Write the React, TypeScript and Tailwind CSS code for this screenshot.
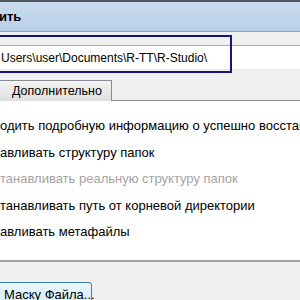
import React from 'react'

const options = [
  { text: 'одить подробную информацию о успешно восстановленных файлах', muted: false },
  { text: 'авливать структуру папок', muted: false },
  { text: 'танавливать реальную структуру папок', muted: true },
  { text: 'танавливать путь от корневой директории', muted: false },
  { text: 'авливать метафайлы', muted: false },
]

export default function App() {
  return (
    <div
      className="w-[300px] h-[300px] overflow-hidden bg-[#f0f0f0] text-[13px] text-black flex flex-col"
      style={{ fontFamily: '"Liberation Sans", Arial, sans-serif' }}
    >
      {/* title bar */}
      <div className="h-[32px] shrink-0 border-t-2 border-[#505860] border-b border-b-[#8ea4bd] bg-gradient-to-b from-[#cadcef] to-[#b8cfe8] flex items-center">
        <span className="ml-[-1px] text-[13px] font-semibold">ить</span>
      </div>

      {/* path field */}
      <div className="relative h-[44px] shrink-0 bg-[#f0f0f0] pt-[13px]">
        <div className="h-[25px] bg-white border-t border-t-[#abadb3] border-b border-b-[#e3e9ef] flex items-center pl-[1px] text-[12px]">
          <span className="whitespace-nowrap">Users\user\Documents\R-TT\R-Studio\</span>
        </div>
        <div className="absolute left-[-4px] top-[3px] w-[236px] h-[38px] border-2 border-[#16167a]" />
      </div>

      {/* tabs */}
      <div className="h-[25px] shrink-0 flex items-end">
        <div className="w-[112px] h-[21px] border border-b-0 border-l-0 border-[#898c95] bg-gradient-to-b from-[#f4f4f4] to-[#dedede] flex items-center pl-[12px] text-[12.5px]">
          Дополнительно
        </div>
        <div className="flex-1 border-b border-[#898c95]" />
      </div>

      {/* options */}
      <div className="h-[159px] shrink-0 bg-white flex flex-col pt-[17px] gap-[10px]">
        {options.map((o) => (
          <div
            key={o.text}
            className={`h-[16.5px] whitespace-nowrap leading-[16px] ${o.muted ? 'text-[#a3a3a3]' : 'text-black'}`}
          >
            {o.text}
          </div>
        ))}
      </div>

      {/* bottom */}
      <div className="flex-1 border-t-2 border-t-[#a0a0a0] bg-[#f0f0f0] pt-[20px]">
        <div className="ml-[-4px] w-[96px] h-[26px] rounded-[3px] border border-[#3c7fb1] bg-gradient-to-b from-[#eaf6fd] to-[#d4eefb] flex items-center pl-[7px] whitespace-nowrap">
          Маску Файла...
        </div>
      </div>
    </div>
  )
}
